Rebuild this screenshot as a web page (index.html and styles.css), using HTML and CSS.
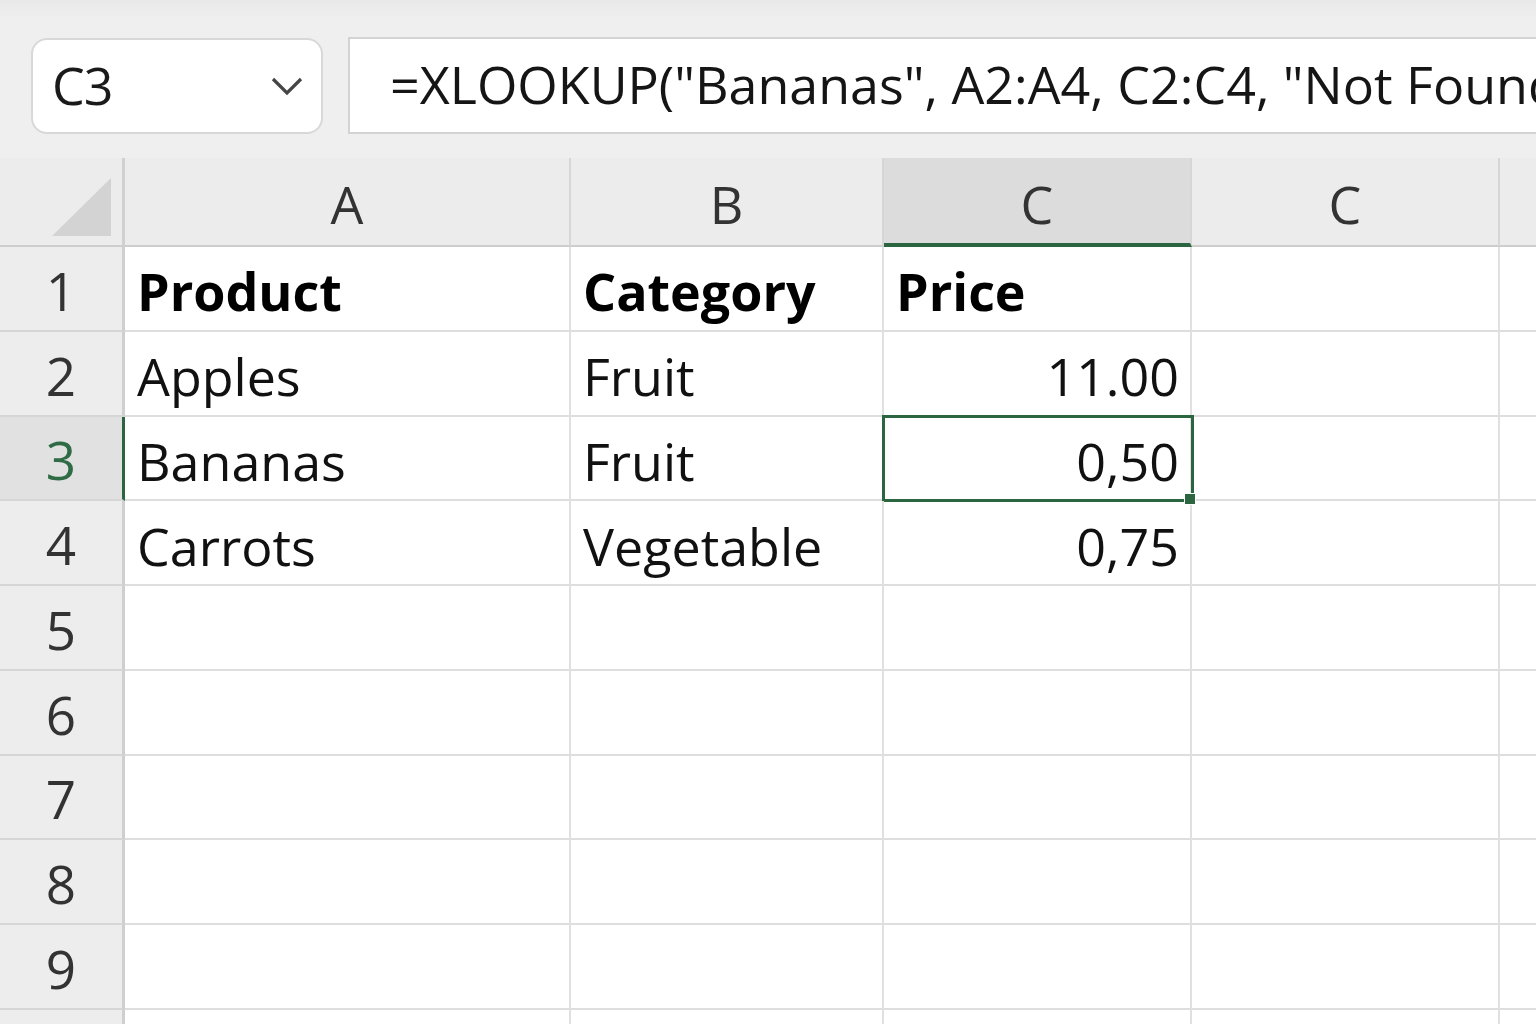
FILE: index.html
```
<!DOCTYPE html>
<html lang="en">
<head>
<meta charset="utf-8">
<title>XLOOKUP</title>
<link rel="stylesheet" href="styles.css">
</head>
<body>
<div class="app">
  <div class="toolbar">
    <div class="namebox">
      <span class="namebox-text">C3</span>
      <svg class="chevron" width="34" height="22" viewBox="0 0 34 22"><path d="M3 4 L17 18 L31 4" fill="none" stroke="#454545" stroke-width="3.2"/></svg>
    </div>
    <div class="formula">=XLOOKUP("Bananas", A2:A4, C2:C4, "Not Found")</div>
  </div>
  <div class="sheet">
    <div class="corner"><svg width="60" height="58" viewBox="0 0 60 58"><polygon points="59,0 59,58 0,58" fill="#d2d3d2"/></svg></div>
    <div class="colhead">A</div>
    <div class="colhead">B</div>
    <div class="colhead sel">C</div>
    <div class="colhead">C</div>
    <div class="colhead last"></div>

    <div class="rowhead">1</div>
    <div class="cell bold">Product</div>
    <div class="cell bold">Category</div>
    <div class="cell bold">Price</div>
    <div class="cell"></div>
    <div class="cell last"></div>

    <div class="rowhead">2</div>
    <div class="cell">Apples</div>
    <div class="cell">Fruit</div>
    <div class="cell num">11.00</div>
    <div class="cell"></div>
    <div class="cell last"></div>

    <div class="rowhead sel">3</div>
    <div class="cell">Bananas</div>
    <div class="cell">Fruit</div>
    <div class="cell num active">0,50</div>
    <div class="cell"></div>
    <div class="cell last"></div>

    <div class="rowhead">4</div>
    <div class="cell">Carrots</div>
    <div class="cell">Vegetable</div>
    <div class="cell num">0,75</div>
    <div class="cell"></div>
    <div class="cell last"></div>

    <div class="rowhead">5</div>
    <div class="cell"></div><div class="cell"></div><div class="cell"></div><div class="cell"></div><div class="cell last"></div>
    <div class="rowhead">6</div>
    <div class="cell"></div><div class="cell"></div><div class="cell"></div><div class="cell"></div><div class="cell last"></div>
    <div class="rowhead">7</div>
    <div class="cell"></div><div class="cell"></div><div class="cell"></div><div class="cell"></div><div class="cell last"></div>
    <div class="rowhead">8</div>
    <div class="cell"></div><div class="cell"></div><div class="cell"></div><div class="cell"></div><div class="cell last"></div>
    <div class="rowhead">9</div>
    <div class="cell"></div><div class="cell"></div><div class="cell"></div><div class="cell"></div><div class="cell last"></div>
    <div class="rowhead"></div>
    <div class="cell"></div><div class="cell"></div><div class="cell"></div><div class="cell"></div><div class="cell last"></div>
  </div>
</div>
</body>
</html>
```
FILE: styles.css
```
* { box-sizing: border-box; }
html, body {
  margin: 0;
  padding: 0;
  width: 1536px;
  height: 1024px;
  overflow: hidden;
  background: #efefef;
  font-family: "Open Sans", "Noto Sans", "Liberation Sans", sans-serif;
}
.app {
  width: 1536px;
  height: 1024px;
  overflow: hidden;
}
.toolbar {
  height: 158px;
  display: flex;
  align-items: flex-start;
  padding: 37px 0 0 31px;
  gap: 25px;
  overflow: hidden;
  background: linear-gradient(#e9e9e9, #efefef 18px, #efefef);
}
.namebox {
  flex: none;
  width: 292px;
  height: 96px;
  margin-top: 1px;
  background: #fff;
  border: 2px solid #d8d8d8;
  border-radius: 16px;
  display: flex;
  align-items: center;
  justify-content: space-between;
  padding: 0 17px 4px 19px;
}
.namebox-text {
  font-size: 52px;
  color: #1a1a1a;
  letter-spacing: -1px;
}
.chevron { margin-top: 4px; }
.formula {
  flex: none;
  width: 1300px;
  height: 97px;
  background: #fff;
  border: 2px solid #d3d3d3;
  border-right: none;
  font-size: 52px;
  color: #151515;
  display: flex;
  align-items: center;
  padding: 0 0 5px 40px;
  white-space: nowrap;
  overflow: hidden;
}
.sheet {
  display: grid;
  grid-template-columns: 125px 446px 313px 308px 308px 36px;
  grid-template-rows: 89px repeat(10, 84.75px);
  background: #fff;
}
.corner {
  background: #ececec;
  border-right: 3px solid #d0d0d0;
  border-bottom: 2px solid #cdcdcd;
  padding: 20px 0 0 52px;
}
.corner svg { display: block; }
.colhead {
  background: #ececec;
  border-right: 2px solid #d6d6d6;
  border-bottom: 2px solid #cdcdcd;
  font-size: 52px;
  color: #333;
  display: flex;
  align-items: center;
  justify-content: center;
  padding-top: 4px;
}
.colhead.sel {
  background: #dcdcdc;
  border-bottom: 4px solid #2b6640;
  padding-top: 6px;
}
.colhead.last { border-right: none; }
.rowhead {
  background: #ededed;
  border-right: 3px solid #cfcfcf;
  border-bottom: 2px solid #d6d6d6;
  font-size: 53px;
  color: #333;
  display: flex;
  align-items: center;
  justify-content: center;
  padding-top: 4px;
}
.rowhead.sel {
  background: #e1e1e1;
  color: #2f6b45;
  border-right-color: #2b6640;
}
.cell {
  border-right: 2px solid #e0e0e0;
  border-bottom: 2px solid #dedede;
  font-size: 52px;
  color: #111;
  display: flex;
  align-items: center;
  padding: 5px 11px 0 12px;
  white-space: nowrap;
  position: relative;
}
.cell.last { border-right: none; }
.cell.bold { font-weight: 700; color: #000; }
.cell.num { justify-content: flex-end; }
.cell.active::after {
  content: "";
  position: absolute;
  left: -2px;
  top: -2px;
  right: -4px;
  bottom: -3px;
  border: 3px solid #2b6640;
  pointer-events: none;
}
.cell.active::before {
  content: "";
  position: absolute;
  right: -6px;
  bottom: -6px;
  width: 10px;
  height: 10px;
  background: #2b6640;
  border: 1px solid #fff;
  z-index: 2;
}
```
